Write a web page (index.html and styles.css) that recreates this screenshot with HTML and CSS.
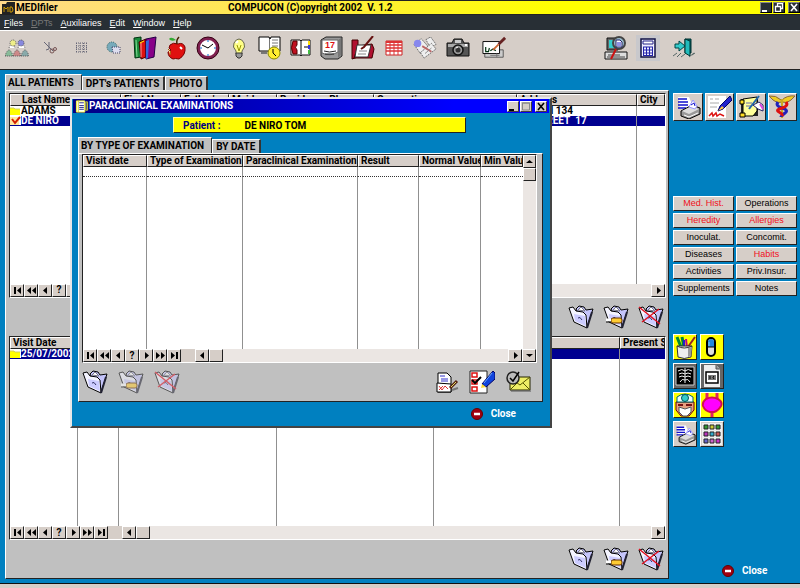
FILE: index.html
```
<!DOCTYPE html>
<html lang="en">
<head>
    <meta charset="UTF-8">
    <meta name="viewport" content="width=device-width, initial-scale=1.0">
    <title>MEDIfiler</title>
    <link rel="stylesheet" href="styles.css">
</head>
<body>
    <svg class="symbols" xmlns="http://www.w3.org/2000/svg">
        <symbol id="folder" viewBox="0 0 26 24">
            <path d="M8 4l3-3 5 1 2 3 7-1-3 9-3 9-5-7z" fill="#c4c4fa" stroke="#000"/>
            <path d="M10 5l3-3 4 4z" fill="#fff" stroke="#778"/>
            <path d="M1 3l4-1 3 4 7 1 3 3 1 13-13-6z" fill="#f4f4ff" stroke="#000"/>
            <path d="M19 23l5-16" stroke="#223" stroke-width="2"/>
            <path d="M6 9l11 2 1 10-11-5z" fill="#ccf"/>
            <path d="M10 13q2-2 4 2" fill="none" stroke="#336"/>
        </symbol>
        <symbol id="folder-edit" viewBox="0 0 26 24">
            <use href="#folder" width="26" height="24"/>
            <rect x="8" y="13" width="11" height="5" rx="2" fill="#fc3" stroke="#630"/>
            <path d="M3 15h5" stroke="#fff" stroke-width="3"/>
            <path d="M3 17h5" stroke="#000"/>
        </symbol>
        <symbol id="folder-del" viewBox="0 0 26 24">
            <use href="#folder" width="26" height="24"/>
            <path d="M1 2l21 17M21 4L4 17" stroke="#e01020" stroke-width="1.500"/>
        </symbol>
        <symbol id="printer" viewBox="0 0 26 24">
            <path d="M3 2h11l5 12H5z" fill="#fff"/>
            <path d="M3 4h9M3 7h10M3 10h10M3 13h8" stroke="#11c" stroke-width="1.600"/>
            <path d="M6 16l11-6 8 3v6l-11 5-8-3z" fill="#999" stroke="#000"/>
            <path d="M7 16l10-5 7 3-10 5z" fill="#ddd"/>
            <path d="M14 12l4-7 4 6-2 3z" fill="#fff" stroke="#99f"/>
            <path d="M16 10l3-2 1 3" fill="none" stroke="#11c"/>
            <path d="M9 20l5 2 9-4" fill="none" stroke="#fff"/>
        </symbol>
        <symbol id="first" viewBox="0 0 9 7"><path d="M1 0h2v7H1zM8 0v7L4 3.500z"/></symbol>
        <symbol id="rew" viewBox="0 0 9 7"><path d="M4 0v7L0 3.500zM9 0v7L5 3.500z"/></symbol>
        <symbol id="prev" viewBox="0 0 9 7"><path d="M6 0v7L2 3.500z"/></symbol>
        <symbol id="next" viewBox="0 0 9 7"><path d="M3 0v7l4-3.500z"/></symbol>
        <symbol id="ffw" viewBox="0 0 9 7"><path d="M0 0v7l4-3.500zM5 0v7l4-3.500z"/></symbol>
        <symbol id="last" viewBox="0 0 9 7"><path d="M1 0v7l4-3.500zM6 0h2v7H6z"/></symbol>
        <symbol id="up" viewBox="0 0 9 7"><path d="M1 5h7L4.500 2z"/></symbol>
        <symbol id="down" viewBox="0 0 9 7"><path d="M1 2h7L4.500 5z"/></symbol>
        <symbol id="min" viewBox="0 0 10 9"><path d="M1 7h5v2H1z" fill="currentColor"/></symbol>
        <symbol id="max" viewBox="0 0 10 9"><path d="M1.500 1v7h7V1z" fill="none" stroke="currentColor"/><path d="M1 1h8" stroke="currentColor"/></symbol>
        <symbol id="restore" viewBox="0 0 10 9"><path d="M3.500 3V.5h5v5H6.500M1.500 3.500h5v5h-5z" fill="none" stroke="currentColor" stroke-width="1.300"/></symbol>
        <symbol id="x" viewBox="0 0 10 9"><path d="M2 1l6 7M8 1L2 8" stroke="currentColor" stroke-width="1.600"/></symbol>
        <symbol id="stop" viewBox="0 0 12 12">
            <circle cx="6" cy="6" r="5.500" fill="#a00010" stroke="#600"/>
            <path d="M3 6h6" stroke="#fff" stroke-width="2.500"/>
        </symbol>
        <symbol id="row-folder" viewBox="0 0 11 9"><path d="M0 2h4l1 1h5v6H0z" fill="#ff0"/><path d="M0 2h4l1 1h5" stroke="#cc6" fill="none"/></symbol>
        <symbol id="row-check" viewBox="0 0 11 9"><path d="M0 1h9v8H0z" fill="#ffe9a0"/><path d="M2 3l3 4 5-6" stroke="#d42000" stroke-width="2" fill="none"/></symbol>
    </svg>

    <header class="titlebar">
        <svg class="app-icon" viewBox="0 0 13 12"><path d="M0 2h4l1-2h8v12H0z" fill="#222"/><path d="M2 5v5M2 5l2 2 2-2v5M8 5v5h2l1-2-1-3z" stroke="#c90" fill="none"/></svg>
        <span class="app-name">MEDIfiler</span>
        <span class="app-copy">COMPUCON (C)opyright 2002&nbsp; V. 1.2</span>
        <div class="win-buttons dark">
            <button aria-label="Minimize"><svg><use href="#min"/></svg></button>
            <button aria-label="Restore"><svg><use href="#restore"/></svg></button>
            <button aria-label="Close"><svg><use href="#x"/></svg></button>
        </div>
    </header>

    <nav class="menubar">
        <button><u>F</u>iles</button>
        <button disabled><u>D</u>PTs</button>
        <button><u>A</u>uxiliaries</button>
        <button><u>E</u>dit</button>
        <button><u>W</u>indow</button>
        <button><u>H</u>elp</button>
    </nav>

    <div class="toolbar">
        <div class="tools tools-a">
            <button aria-label="Patients"><svg viewBox="0 0 24 18">
                <g stroke="#555" stroke-dasharray="1 1">
                    <path d="M4 9q3-8 6 0M13 9q3-10 7 0" fill="#fff"/>
                    <circle cx="8" cy="4" r="3" fill="#ee8"/><circle cx="16" cy="4" r="3" fill="#88d"/>
                    <path d="M0 17q4-12 8 0z" fill="#8b9"/><path d="M8 17q4-12 8 0z" fill="#c88"/><path d="M16 17q4-12 8 0z" fill="#8aa"/>
                </g></svg></button>
            <button aria-label="Cut"><svg viewBox="0 0 24 18"><path d="M7 3l9 9M12 3v7l-3 1" stroke="#667" fill="none"/><circle cx="15" cy="12" r="2" fill="none" stroke="#755"/><circle cx="18" cy="10" r="1.500" fill="none" stroke="#755"/></svg></button>
            <button aria-label="Grid"><svg viewBox="0 0 24 18"><path d="M7 4h11M7 7h11M7 10h11M7 13h11M7.500 4v10M11 4v10M14.500 4v10M17.500 4v10" stroke="#667" stroke-dasharray="1 1"/></svg></button>
            <button aria-label="Globe"><svg viewBox="0 0 24 18"><circle cx="11" cy="8" r="5" fill="#7ab" stroke="#366" stroke-dasharray="1 1"/><path d="M11 8h8v6h-7z" fill="#dde" stroke="#446" stroke-dasharray="1 1"/></svg></button>
            <button aria-label="Library"><svg viewBox="0 0 24 24">
                <path d="M1 2l7-1v20l-6 1z" fill="#1a8a3a" stroke="#031"/><path d="M3 4l1 17" stroke="#8d9"/>
                <path d="M6 6l7-3v18l-5 2z" fill="#d11" stroke="#400"/><path d="M8 7v14" stroke="#f99"/>
                <path d="M13 3l10-2-2 20-8 2z" fill="#808" stroke="#204"/><path d="M13 5l3-1-1 18-2 1z" fill="#36d"/><path d="M7 7l4-2" stroke="#ff0"/>
            </svg></button>
        </div>
        <div class="tools tools-b">
            <button aria-label="Diet"><svg viewBox="0 0 24 24">
                <path d="M5 9q3-3 8-1 5-2 7 3 1 8-6 12-4-1-6 0Q3 21 3 16l3-2-2-2z" fill="#e01010" stroke="#700"/>
                <path d="M12 8q-1-4 2-7" stroke="#420" stroke-width="1.500" fill="none"/><path d="M11 4Q6 0 4 3q2 3 7 1z" fill="#3a3"/><path d="M3 13q4 2 2 6" fill="#fd9" stroke="#a50"/><path d="M15 11l2 2" stroke="#fff" stroke-width="2"/>
            </svg></button>
            <button aria-label="Clock"><svg viewBox="0 0 24 24">
                <circle cx="12" cy="12" r="9.500" fill="#fff" stroke="#802050" stroke-width="3"/>
                <circle cx="12" cy="12" r="11" fill="none" stroke="#301"/>
                <path d="M6 9l6 3 5-4" stroke="#000" fill="none"/><path d="M12 4v2M12 18v2M4 12h2M18 12h2" stroke="#06c"/>
            </svg></button>
            <button aria-label="Tips"><svg viewBox="0 0 24 24">
                <path d="M9 15q-4-4-2-8 2-4 5-4t5 4q2 4-2 8v3H9z" fill="#ff8" stroke="#665"/><path d="M10 9l2 6 2-6" stroke="#990" fill="none"/><path d="M9 17h6v3l-2 2h-2l-2-2z" fill="#999" stroke="#333"/><path d="M9 7l2-2" stroke="#fff" stroke-width="2"/>
            </svg></button>
            <button aria-label="Schedule"><svg viewBox="0 0 24 24">
                <path d="M1 1h10l1 2 1-2h9v14H1z" fill="#fff" stroke="#000"/><path d="M11.500 3v12M14 4h6M14 7h6M14 10h6" stroke="#777"/>
                <circle cx="16" cy="17" r="6" fill="#ffee30" stroke="#880"/><path d="M15 13v4l3 3" stroke="#000" fill="none"/><path d="M3 17h6" stroke="#777" stroke-width="2"/>
            </svg></button>
            <button aria-label="Phone book"><svg viewBox="0 0 24 24">
                <path d="M2 4h9l1 1 1-1h8v15h-8l-1 1-1-1H2z" fill="#fff" stroke="#111"/>
                <path d="M4 5h4v4q-3 2 0 5v4H4q-3-6 0-13z" fill="#c01020" stroke="#500"/><path d="M12 5v14M15 11h4" stroke="#000"/><path d="M20 5v4" stroke="#fd0" stroke-width="2"/><path d="M20 9v4" stroke="#33d" stroke-width="2"/><path d="M20 14v4" stroke="#4b4" stroke-width="2"/>
            </svg></button>
            <button aria-label="Calendar"><svg viewBox="0 0 24 24">
                <path d="M1 4l5-3h16v19l-4 3H5l-4-3z" fill="#999" stroke="#222"/><path d="M2 4h16v12q-8 5-16 1z" fill="#fff" stroke="#666"/>
                <path d="M18 4l3-2v17l-3 3z" fill="#777"/>
                <text x="5" y="12" class="cal-day">17</text><path d="M4 15q5 2 12 0M5 18h9" stroke="#222" fill="none"/>
            </svg></button>
            <button aria-label="Diary"><svg viewBox="0 0 24 24">
                <path d="M1 4h6v17l-6 2z" fill="#b01030" stroke="#400"/><path d="M7 10l14-2 2 5-2 9H3z" fill="#b01030" stroke="#400"/>
                <path d="M6 9h14l-3 12H4z" fill="#fff" stroke="#333"/><path d="M22 0L13 11l-3 2" stroke="#611" stroke-width="2" fill="none"/><path d="M8 15h8M7 18h8" stroke="#888"/>
            </svg></button>
            <button aria-label="Table"><svg viewBox="0 0 24 24">
                <path d="M4 5h16v14H4z" fill="#fff" stroke="#c22"/><path d="M4 9h16M4 12h16M4 15h16" stroke="#d33" stroke-width="1.500"/><path d="M8 7v12M12 7v12M16 7v12" stroke="#d33"/><path d="M4 6h16" stroke="#d33" stroke-width="2"/>
            </svg></button>
            <button aria-label="Documents"><svg viewBox="0 0 26 24">
                <g stroke="#666" stroke-dasharray="2 1" fill="#eee"><path d="M1 8L9 2l7 8-8 8z"/><path d="M14 3l5-3 6 8-6 4z"/><path d="M8 17l12-10 5 6-13 10z"/></g>
                <circle cx="5" cy="7" r="4" fill="#88e"/><path d="M10 10l10 6" stroke="#b66" stroke-width="2"/><path d="M13 18l7-6" stroke="#888"/>
            </svg></button>
        </div>
        <div class="tools tools-c">
            <button aria-label="Camera"><svg viewBox="0 0 24 24">
                <path d="M1 7h5l2-4h8l2 4h5v13H1z" fill="#555" stroke="#111"/><path d="M2 8h20v3H2z" fill="#aaa"/><path d="M9 4h6v3H9z" fill="#ccc"/>
                <circle cx="12" cy="14" r="5" fill="#999" stroke="#111" stroke-width="1.500"/><circle cx="12" cy="14" r="2.500" fill="#333"/><path d="M10 12l2-1" stroke="#fff"/><path d="M19 8h2v2h-2z" fill="#fff"/>
            </svg></button>
            <button aria-label="Sign"><svg viewBox="0 0 26 24">
                <path d="M3 14h20v8H3z" fill="#ccc" stroke="#555"/><path d="M1 5h18v13H1z" fill="#fff" stroke="#000"/>
                <path d="M4 11v5h3l1-4M9 15l3-2 3 2" stroke="#031" stroke-width="1.300" fill="none"/>
                <path d="M25 1l-7 7" stroke="#622" stroke-width="3"/><path d="M18 8l-6 6" stroke="#c63" stroke-width="2"/><path d="M9 20h10M16 18v4" stroke="#777"/>
            </svg></button>
        </div>
        <div class="tools tools-d">
            <button aria-label="Search"><svg viewBox="0 0 24 24">
                <path d="M3 2h11v12H3z" fill="#666" stroke="#111"/><path d="M5 4h6v8H5z" fill="#3cc"/><path d="M1 16h22v7H1z" fill="#ddd" stroke="#111"/><path d="M4 19h12M3 21h18" stroke="#444"/>
                <circle cx="15" cy="7" r="6" fill="#9bc" stroke="#444" stroke-width="2"/><path d="M12 4h4l2 2v5h-6z" fill="#fff" stroke="#226"/><path d="M13 7h4M13 9h4" stroke="#22c"/><path d="M12 13L7 23" stroke="#c11" stroke-width="2"/>
            </svg></button>
            <button class="pressed" aria-label="Calculator"><svg viewBox="0 0 24 24">
                <path d="M5 3h14v18H5z" fill="#eef" stroke="#114" stroke-width="1.500"/><path d="M7 5h10v3H7z" fill="#fff" stroke="#228"/>
                <path d="M7 11h10M7 14h10M7 17h10M7 19.500h10M7.500 11v8M10.500 11v8M13.500 11v8M16.500 11v8" stroke="#22a"/>
            </svg></button>
            <button aria-label="Exit"><svg viewBox="0 0 24 24">
                <path d="M13 3h6v14h-6z" fill="#066" stroke="#033"/><path d="M13 3l5 2v15l-5-3z" fill="#2bb" stroke="#033"/>
                <path d="M3 8h4V5l6 5-6 5v-3H3z" fill="#3cc" stroke="#044"/><path d="M1 20l4-3M5 21l4-4M9 21l4-3M17 21l5-4M20 19l3-2" stroke="#566"/>
            </svg></button>
        </div>
    </div>

    <main class="desk">
        <section class="records">
            <div class="tabs">
                <button class="tab active">ALL PATIENTS</button><button class="tab">DPT's PATIENTS</button><button class="tab">PHOTO</button>
            </div>
            <div class="panel">
                <div class="grid-box">
                    <div class="sheet">
                        <table class="patients">
                            <colgroup><col class="w111"><col class="w60"><col class="w48"><col class="w48"><col class="w97"><col class="w143"><col><col class="w28"></colgroup>
                            <thead><tr><th class="indent">Last Name</th><th>First Name</th><th>Father's</th><th>Maiden</th><th>Residence Phone</th><th>Occupation</th><th>Address</th><th>City</th></tr></thead>
                            <tbody>
                                <tr><td><svg class="row-icon"><use href="#row-folder"/></svg>ADAMS</td><td></td><td></td><td></td><td></td><td></td><td>NORTH 134</td><td></td></tr>
                                <tr class="selected"><td><svg class="row-icon"><use href="#row-check"/></svg>DE NIRO</td><td>TOM</td><td></td><td></td><td></td><td></td><td>12 STREET&nbsp; 17</td><td></td></tr>
                                <tr class="filler"><td></td><td></td><td></td><td></td><td></td><td></td><td></td><td></td></tr>
                            </tbody>
                        </table>
                    </div>
                    <div class="navbar">
                        <button aria-label="First"><svg><use href="#first"/></svg></button>
                        <button aria-label="Rewind"><svg><use href="#rew"/></svg></button>
                        <button aria-label="Previous"><svg><use href="#prev"/></svg></button>
                        <button>?</button>
                        <button aria-label="Next"><svg><use href="#next"/></svg></button>
                        <button aria-label="Forward"><svg><use href="#ffw"/></svg></button>
                        <button aria-label="Last"><svg><use href="#last"/></svg></button>
                        <button class="scroll-left" aria-label="Scroll left"><svg><use href="#prev"/></svg></button>
                        <span class="thumb"></span><span class="track"></span>
                        <button aria-label="Scroll right"><svg><use href="#next"/></svg></button>
                    </div>
                </div>
                <div class="actions">
                    <button aria-label="New"><svg><use href="#folder"/></svg></button>
                    <button aria-label="Edit"><svg><use href="#folder-edit"/></svg></button>
                    <button aria-label="Delete"><svg><use href="#folder-del"/></svg></button>
                </div>
                <div class="grid-box">
                    <div class="sheet">
                        <table class="visits">
                            <colgroup><col class="w68"><col class="w41"><col class="w158"><col class="w157"><col><col class="w45"></colgroup>
                            <thead><tr><th>Visit Date</th><th></th><th></th><th></th><th></th><th>Present Symptoms</th></tr></thead>
                            <tbody>
                                <tr class="selected"><td><svg class="row-icon"><use href="#row-folder"/></svg>25/07/2002</td><td></td><td></td><td></td><td></td><td></td></tr>
                                <tr class="filler"><td></td><td></td><td></td><td></td><td></td><td></td></tr>
                            </tbody>
                        </table>
                    </div>
                    <div class="navbar">
                        <button aria-label="First"><svg><use href="#first"/></svg></button>
                        <button aria-label="Rewind"><svg><use href="#rew"/></svg></button>
                        <button aria-label="Previous"><svg><use href="#prev"/></svg></button>
                        <button>?</button>
                        <button aria-label="Next"><svg><use href="#next"/></svg></button>
                        <button aria-label="Forward"><svg><use href="#ffw"/></svg></button>
                        <button aria-label="Last"><svg><use href="#last"/></svg></button>
                        <button class="scroll-left" aria-label="Scroll left"><svg><use href="#prev"/></svg></button>
                        <span class="thumb"></span><span class="track"></span>
                        <button aria-label="Scroll right"><svg><use href="#next"/></svg></button>
                    </div>
                </div>
                <div class="actions">
                    <button aria-label="New"><svg><use href="#folder"/></svg></button>
                    <button aria-label="Edit"><svg><use href="#folder-edit"/></svg></button>
                    <button aria-label="Delete"><svg><use href="#folder-del"/></svg></button>
                </div>
            </div>
        </section>

        <aside class="side">
            <div class="side-top">
                <button aria-label="Print"><svg><use href="#printer"/></svg></button>
                <button aria-label="Prescription"><svg viewBox="0 0 26 24">
                    <path d="M2 1h18v22H2z" fill="#fff"/><path d="M4 4h3M9 4h4M4 8h9M4 12h7" stroke="#aaa"/><path d="M3 21l3-3 1 3 3-3 1 3 3-2 4 2" stroke="#d11" stroke-width="1.500" fill="none"/>
                    <path d="M24 1l2 4-9 9-5 2 2-5z" fill="#22c" stroke="#006"/><path d="M12 16l4-5 2 2z" fill="#fc4"/>
                </svg></button>
                <button aria-label="Notes"><svg viewBox="0 0 26 24">
                    <path d="M3 4h17v17H3z" fill="#222"/><path d="M5 4l14-2v14l-4 5H5z" fill="#ff9" stroke="#000"/><path d="M2 5h4v4H2zM2 18h5v4H2z" fill="#fd2" stroke="#000"/><path d="M8 8h6M8 11h5" stroke="#66a"/>
                    <path d="M21 1L11 14" stroke="#26a" stroke-width="2"/><path d="M15 10l6-3 4 3v6l-5-2z" fill="#fff" stroke="#226"/><path d="M22 9l3 5" stroke="#d4d" stroke-width="2"/>
                </svg></button>
                <button aria-label="Doctor"><svg viewBox="0 0 26 24">
                    <path d="M12 5Q7 0 0 1l4 4q4 4 9 2 5 2 9-2l4-4q-8-1-13 4z" fill="#ec2" stroke="#864"/><path d="M13 4v19" stroke="#ca2" stroke-width="2"/>
                    <path d="M9 7q-3 4 4 6t3 5-4 4" stroke="#22b" stroke-width="3" fill="none"/><path d="M17 7q3 4-4 6t-3 4 3 4" stroke="#d11" stroke-width="3" fill="none"/>
                </svg></button>
            </div>
            <div class="side-links">
                <button class="red">Med. Hist.</button><button>Operations</button>
                <button class="red">Heredity</button><button class="red">Allergies</button>
                <button>Inoculat.</button><button>Concomit.</button>
                <button>Diseases</button><button class="red">Habits</button>
                <button>Activities</button><button>Priv.Insur.</button>
                <button>Supplements</button><button>Notes</button>
            </div>
            <div class="side-tools">
                <button class="yellow" aria-label="Pencils"><svg viewBox="0 0 22 24">
                    <path d="M7 12L3 2M10 12L8 2" stroke="#083" stroke-width="3"/><path d="M10 13V5" stroke="#22c" stroke-width="2"/><path d="M13 13l-1-9" stroke="#b08" stroke-width="2"/><path d="M14 12l7-10" stroke="#922" stroke-width="2"/>
                    <path d="M3 11h15l-1 11q-7 3-13 0z" fill="#eee" stroke="#333"/><path d="M14 13v9l3-1 1-9z" fill="#999"/><path d="M3 11q7 4 15 0" fill="none" stroke="#333"/>
                </svg></button>
                <button class="yellow" aria-label="Drugs"><svg viewBox="0 0 22 24">
                    <rect x="6" y="3" width="8" height="18" rx="4" fill="#ddd" stroke="#000" stroke-width="2"/><path d="M7 12V7q0-3 3-3t3 3v5z" fill="#28d"/><path d="M8 7v4" stroke="#8cf"/><path d="M7 12h6" stroke="#000"/>
                </svg></button>
                <button class="gray" aria-label="X-ray"><svg viewBox="0 0 22 24">
                    <path d="M2 3h18v18H2z" fill="#000" stroke="#ccc"/><path d="M11 4v15M4 7q4-3 7 0 3-3 7 0M5 10q3-2 6 0 3-2 6 0M5 13q3-2 6 0 3-2 6 0M6 18q2-4 5-2 3-2 5 2" stroke="#eee" fill="none"/>
                </svg></button>
                <button class="gray" aria-label="Scan"><svg viewBox="0 0 22 24">
                    <path d="M3 1h12l4 4v18H3z" fill="#eee"/><path d="M15 1v4h4" fill="#999" stroke="#555"/><path d="M5 8h12v11H5z" fill="#fff" stroke="#000" stroke-width="1.500"/><path d="M7 11h8v5H7z" fill="#777"/><path d="M9 12v3M13 12q-2 1 0 3" stroke="#000" fill="none"/>
                </svg></button>
                <button class="yellow" aria-label="Surgeon"><svg viewBox="0 0 22 24">
                    <path d="M2 9h18v8l-5 6H7l-5-6z" fill="#e9a080" stroke="#600"/><path d="M3 4q8-6 16 0v5H3z" fill="#eff" stroke="#066"/><circle cx="11" cy="5" r="3.500" fill="#3cc" stroke="#055"/>
                    <path d="M4 12h5M12 12h6" stroke="#711" stroke-width="2"/><path d="M5 14l6 2 6-2v5l-4 4H9l-4-4z" fill="#fff" stroke="#555"/>
                </svg></button>
                <button class="yellow" aria-label="Urology"><svg viewBox="0 0 22 24">
                    <path d="M6 0v6M16 0v6M11 18v6" stroke="#e22060" stroke-width="3"/><path d="M5 6q6-3 12 0 5 3 3 7-3 5-7 6h-4q-5-1-7-6-1-4 3-7z" fill="#f0f" stroke="#d01050" stroke-width="2"/>
                </svg></button>
                <button aria-label="Print report"><svg><use href="#printer"/></svg></button>
                <button aria-label="Color grid"><svg viewBox="0 0 22 24">
                    <path d="M1 1h20v22H1z" fill="#eee"/>
                    <g stroke="#222">
                        <path d="M3 3h4v4H3z" fill="#393"/><path d="M9 3h4v4H9z" fill="#cc3"/><path d="M15 3h4v4h-4z" fill="#393"/>
                        <path d="M3 10h4v4H3z" fill="#b3b"/><path d="M9 10h4v4H9z" fill="#3ac"/><path d="M15 10h4v4h-4z" fill="#c55"/>
                        <path d="M3 17h4v4H3z" fill="#66c"/><path d="M9 17h4v4H9z" fill="#c6c"/><path d="M15 17h4v4h-4z" fill="#c3c"/>
                    </g>
                </svg></button>
            </div>
            <button class="close-btn"><svg><use href="#stop"/></svg>Close</button>
        </aside>

        <!-- floating window -->
        <section class="dialog">
            <div class="dialog-title">
                <svg viewBox="0 0 14 14"><path d="M1 1h9v12H1z" fill="#fff" stroke="#ff3"/><path d="M3 1v12M11 2h2v9h-2z" stroke="#cc3" fill="#448"/><path d="M4 3h5M4 6h5M4 8h5M4 10h5" stroke="#228"/></svg>
                <span>PARACLINICAL EXAMINATIONS</span>
                <div class="win-buttons">
                    <button aria-label="Minimize"><svg><use href="#min"/></svg></button>
                    <button class="dim" aria-label="Maximize"><svg><use href="#max"/></svg></button>
                    <button aria-label="Close"><svg><use href="#x"/></svg></button>
                </div>
            </div>
            <div class="patient-bar"><span class="key">Patient :</span><span>DE NIRO TOM</span></div>
            <div class="tabs">
                <button class="tab active">BY TYPE OF EXAMINATION</button><button class="tab">BY DATE</button>
            </div>
            <div class="panel">
                <div class="grid-box">
                    <div class="sheet">
                        <table class="exams">
                            <colgroup><col class="w64"><col class="w96"><col class="w115"><col class="w61"><col class="w62"><col></colgroup>
                            <thead><tr><th>Visit date</th><th>Type of Examination</th><th>Paraclinical Examination</th><th>Result</th><th>Normal Values</th><th>Min Value</th></tr></thead>
                            <tbody>
                                <tr class="current"><td></td><td></td><td></td><td></td><td></td><td></td></tr>
                                <tr class="filler"><td></td><td></td><td></td><td></td><td></td><td></td></tr>
                            </tbody>
                        </table>
                        <div class="vscroll">
                            <button aria-label="Scroll up"><svg><use href="#up"/></svg></button>
                            <span class="thumb"></span>
                        </div>
                    </div>
                    <div class="navbar">
                        <button aria-label="First"><svg><use href="#first"/></svg></button>
                        <button aria-label="Rewind"><svg><use href="#rew"/></svg></button>
                        <button aria-label="Previous"><svg><use href="#prev"/></svg></button>
                        <button>?</button>
                        <button aria-label="Next"><svg><use href="#next"/></svg></button>
                        <button aria-label="Forward"><svg><use href="#ffw"/></svg></button>
                        <button aria-label="Last"><svg><use href="#last"/></svg></button>
                        <button class="scroll-left" aria-label="Scroll left"><svg><use href="#prev"/></svg></button>
                        <span class="thumb"></span><span class="track"></span>
                        <button aria-label="Scroll right"><svg><use href="#next"/></svg></button>
                        <button aria-label="Scroll down"><svg><use href="#down"/></svg></button>
                    </div>
                </div>
                <div class="actions">
                    <button aria-label="New"><svg><use href="#folder"/></svg></button>
                    <button disabled aria-label="Edit"><svg><use href="#folder-edit"/></svg></button>
                    <button disabled aria-label="Delete"><svg><use href="#folder-del"/></svg></button>
                    <button class="push" aria-label="Report"><svg viewBox="0 0 26 24">
                        <path d="M5 3h9l4 4v15H5z" fill="#fff" stroke="#000"/><path d="M7 6h5M8 9h7M8 11h7" stroke="#33c"/><path d="M4 13l14 1v8H4z" fill="#fff" stroke="#000"/><path d="M6 16l3 4 3-4 3 3M6 20l4-4" stroke="#d33" fill="none"/><path d="M24 11l-7 7" stroke="#521" stroke-width="3"/><path d="M23 12l-5 5" stroke="#dd6"/><path d="M19 20l6-2" stroke="#777" stroke-width="2"/>
                    </svg></button>
                    <button aria-label="Checklist"><svg viewBox="0 0 26 24">
                        <path d="M1 1h17v22H1z" fill="#fff" stroke="#222"/><path d="M3 3h5v4H3zM3 10h5v4H3zM3 17h5v4H3z" fill="#fff" stroke="#d11" stroke-width="1.500"/><path d="M3 10l3 3 6-6" stroke="#000" stroke-width="2" fill="none"/>
                        <path d="M24 1l2 2v6l-9 8-4-3z" fill="#14d" stroke="#006"/><path d="M23 3l-8 10" stroke="#6af"/><path d="M13 14l4 3-5 1z" fill="#fd3"/>
                    </svg></button>
                    <button aria-label="Mail"><svg viewBox="0 0 26 24">
                        <path d="M5 7h20v13H5z" fill="#ee6" stroke="#220"/><path d="M5 20l7-7M25 20l-7-7M5 8l10 7L25 7" fill="none" stroke="#550"/><path d="M6 21h20" stroke="#555"/>
                        <circle cx="8" cy="8" r="6" fill="#bbb" stroke="#222" stroke-width="1.500"/><path d="M5 8l3 3 6-9" fill="none" stroke="#000" stroke-width="1.500"/>
                    </svg></button>
                </div>
            </div>
            <button class="close-btn"><svg><use href="#stop"/></svg>Close</button>
        </section>
    </main>
    <footer class="statusbar"></footer>
</body>
</html>
```
FILE: styles.css
```
* {
    box-sizing: border-box;
}

body {
    margin: 0;
    min-height: 100vh;
    display: flex;
    flex-direction: column;
    font: bold 10px/10px Roboto, "Liberation Sans", sans-serif;
    color: #000;
    background: #0080c0;
}

button {
    font: inherit;
    color: inherit;
    padding: 0;
    border: none;
    background: none;
}

.symbols {
    position: absolute;
    width: 0;
    height: 0;
}

/* title and menu */
.titlebar {
    display: flex;
    align-items: center;
    height: 15px;
    padding-left: 2px;
    border-top: 1px solid #222;
    border-bottom: 1px solid #222;
    background: linear-gradient(to right, #ffd98a, #ffee40 40%, #ffff00 70%);
}

.app-icon {
    width: 13px;
    height: 12px;
}

.app-name {
    width: 213px;
    padding-left: 1px;
}

.win-buttons {
    display: flex;
    gap: 1px;
    margin-left: auto;
    color: #000;
}

.win-buttons button {
    display: flex;
    align-items: center;
    justify-content: center;
    width: 12px;
    height: 11px;
    background: #d6cec8;
    border: 1px solid;
    border-color: #fff #404040 #404040 #fff;
}

.win-buttons svg {
    width: 10px;
    height: 9px;
}

.win-buttons button:last-child {
    margin-left: 2px;
}

.win-buttons.dark button {
    background: #282f35;
    border-color: #888 #000 #000 #888;
    color: #fff;
}

.win-buttons .dim {
    color: #888;
}

.menubar {
    display: flex;
    gap: 8px;
    height: 15px;
    padding-left: 4px;
    background: #282f35;
    color: #fff;
    font: 9px/14px "Liberation Sans", sans-serif;
}

.menubar button:disabled {
    color: #777;
}

/* toolbar */
.toolbar {
    display: flex;
    align-items: center;
    height: 40px;
    padding: 0 1px 4px;
    background: #d6cec8;
    border-top: 1px solid #fff;
    border-bottom: 1px solid #222;
}

.tools {
    display: flex;
}

.tools button {
    width: 31px;
    height: 26px;
    display: flex;
    align-items: center;
    justify-content: center;
}

.tools svg {
    width: 24px;
    height: 24px;
}

.tools-a button,
.tools-d button {
    width: 32px;
}

.tools-c button {
    width: 36px;
}

.tools-d {
    margin-left: 88px;
}

.tools-d .pressed {
    width: 24px;
    margin: 0 8px 0 4px;
    background: #c8c8cc;
}

.cal-day {
    font: bold 9px "Liberation Sans", sans-serif;
    fill: #d11;
}

/* main area */
.desk {
    position: relative;
    flex: 1;
    display: flex;
    padding: 4px 3px 4px 5px;
}

.records {
    flex: 1;
    min-width: 0;
    display: flex;
    flex-direction: column;
}

.tabs {
    display: flex;
    align-items: flex-end;
}

.tab {
    height: 14px;
    padding: 1px 4px 0 3px;
    background: #c0c0c0;
    border-top: 1px solid #fff;
    border-left: 1px solid #fff;
    border-right: 2px solid #333;
}

.tab.active {
    height: 16px;
    padding: 0 7px 0 2px;
    border-right-width: 1px;
}

.panel {
    flex: 1;
    display: flex;
    flex-direction: column;
    padding: 2px 2px 0 3px;
    background: #c0c0c0;
    border: 1px solid;
    border-color: #fff #222 #222 #fff;
}

.grid-box {
    flex: 1;
    display: flex;
    flex-direction: column;
    border: 1px solid;
    border-color: #222 #fff #fff #222;
}

.sheet {
    flex: 1;
    display: flex;
    background: #fff;
}

table {
    flex: 1;
    width: 100%;
    table-layout: fixed;
    border-collapse: separate;
    border-spacing: 0;
}

th {
    height: 12px;
    padding: 0 0 0 2px;
    text-align: left;
    white-space: nowrap;
    overflow: hidden;
    background: #d6cec8;
    border: 1px solid;
    border-color: #fff #222 #222 #fff;
}

th.indent {
    padding-left: 11px;
}

td {
    height: 10px;
    padding: 0 0 0 3px;
    white-space: nowrap;
    overflow: hidden;
    border-right: 1px solid #909090;
}

td:first-child {
    padding-left: 0;
}

td:last-child {
    border-right: none;
}

.row-icon {
    width: 11px;
    height: 9px;
    vertical-align: top;
    background: #fff;
}

.selected td {
    background: #000090;
    color: #fff;
}

.current td {
    border-bottom: 1px dotted #333;
}

.filler td {
    height: auto;
}

.w28 { width: 28px; }
.w41 { width: 41px; }
.w45 { width: 45px; }
.w48 { width: 48px; }
.w60 { width: 60px; }
.w61 { width: 61px; }
.w62 { width: 62px; }
.w64 { width: 64px; }
.w68 { width: 68px; }
.w96 { width: 96px; }
.w97 { width: 97px; }
.w111 { width: 111px; }
.w115 { width: 115px; }
.w143 { width: 143px; }
.w157 { width: 157px; }
.w158 { width: 158px; }

.navbar {
    display: flex;
    height: 13px;
    background: #d6cec8;
}

.navbar button,
.vscroll button,
.thumb {
    display: flex;
    align-items: center;
    justify-content: center;
    width: 14px;
    background: #d6cec8;
    border: 1px solid;
    border-color: #fff #222 #222 #fff;
}

.navbar svg,
.vscroll svg {
    width: 9px;
    height: 7px;
}

.navbar .scroll-left {
    margin-left: 14px;
}

.track {
    flex: 1;
    background: #ebe6e3;
}

.vscroll {
    width: 13px;
    background: #ebe6e3;
}

.vscroll button,
.vscroll .thumb {
    width: 13px;
    height: 13px;
}

.actions {
    display: flex;
    align-items: center;
    justify-content: flex-end;
    gap: 9px;
    height: 38px;
    padding-right: 2px;
}

.actions svg {
    display: block;
    width: 26px;
    height: 24px;
}

.actions button:disabled {
    opacity: 0.55;
}

/* right side */
.side {
    width: 124px;
    margin-left: 4px;
    padding-top: 19px;
    display: flex;
    flex-direction: column;
}

.side button:not(.close-btn) {
    background: #d6cec8;
    border: 1px solid;
    border-color: #fff #222 #222 #fff;
}

.side-top {
    display: grid;
    grid-template-columns: repeat(4, 1fr);
    gap: 2px;
}

.side-top button {
    height: 28px;
}

.side svg {
    display: block;
    margin: auto;
    width: 26px;
    height: 24px;
}

.side-links {
    display: grid;
    grid-template-columns: 1fr 1fr;
    gap: 2px;
    margin-top: 75px;
    font: 9px/13px "Liberation Sans", sans-serif;
}

.side-links button {
    height: 15px;
}

.side-links .red {
    color: #f01020;
}

.side-tools {
    display: grid;
    grid-template-columns: 24px 24px;
    gap: 3px;
    margin-top: 38px;
}

.side-tools button {
    height: 26px;
}

.side-tools svg {
    width: 22px;
}

.side .side-tools .yellow {
    background: #ff0;
}

.side .side-tools .gray {
    background: #666;
}

.close-btn {
    display: flex;
    align-items: center;
    gap: 8px;
    color: #fff;
}

.close-btn svg,
.side .close-btn svg {
    width: 12px;
    height: 12px;
    margin: 0;
}

.side .close-btn {
    margin: auto 0 2px 49px;
}

/* paraclinical window */
.dialog {
    position: absolute;
    left: 70px;
    top: 27px;
    width: 482px;
    height: 331px;
    display: flex;
    flex-direction: column;
    padding: 0 7px 0 6px;
    background: #0080c0;
    border: 2px solid;
    border-color: #e8e8e8 #444 #444 #e8e8e8;
}

.dialog-title {
    display: flex;
    align-items: center;
    height: 14px;
    margin: 0 -6px 0 -5px;
    padding: 0 2px;
    color: #fff;
    background: linear-gradient(to right, #000084, #0000ff 80%);
}

.dialog-title > svg {
    width: 14px;
    height: 13px;
}

.patient-bar {
    display: flex;
    gap: 24px;
    width: 293px;
    margin: 4px 0 4px 95px;
    padding: 3px 0 1px 9px;
    background: #ff0;
    border: 1px solid;
    border-color: #ffa #222 #222 #ffa;
}

.patient-bar .key {
    color: #000080;
}

.dialog .panel {
    padding-top: 0;
    padding-right: 5px;
}

.dialog .actions {
    gap: 10px;
    padding-right: 6px;
}

.dialog .actions .push {
    margin-left: auto;
}

.dialog .close-btn {
    align-self: flex-end;
    height: 24px;
    margin-right: 27px;
}

.statusbar {
    height: 5px;
    background: #d6cec8;
    border-top: 1px solid #111;
}
```
